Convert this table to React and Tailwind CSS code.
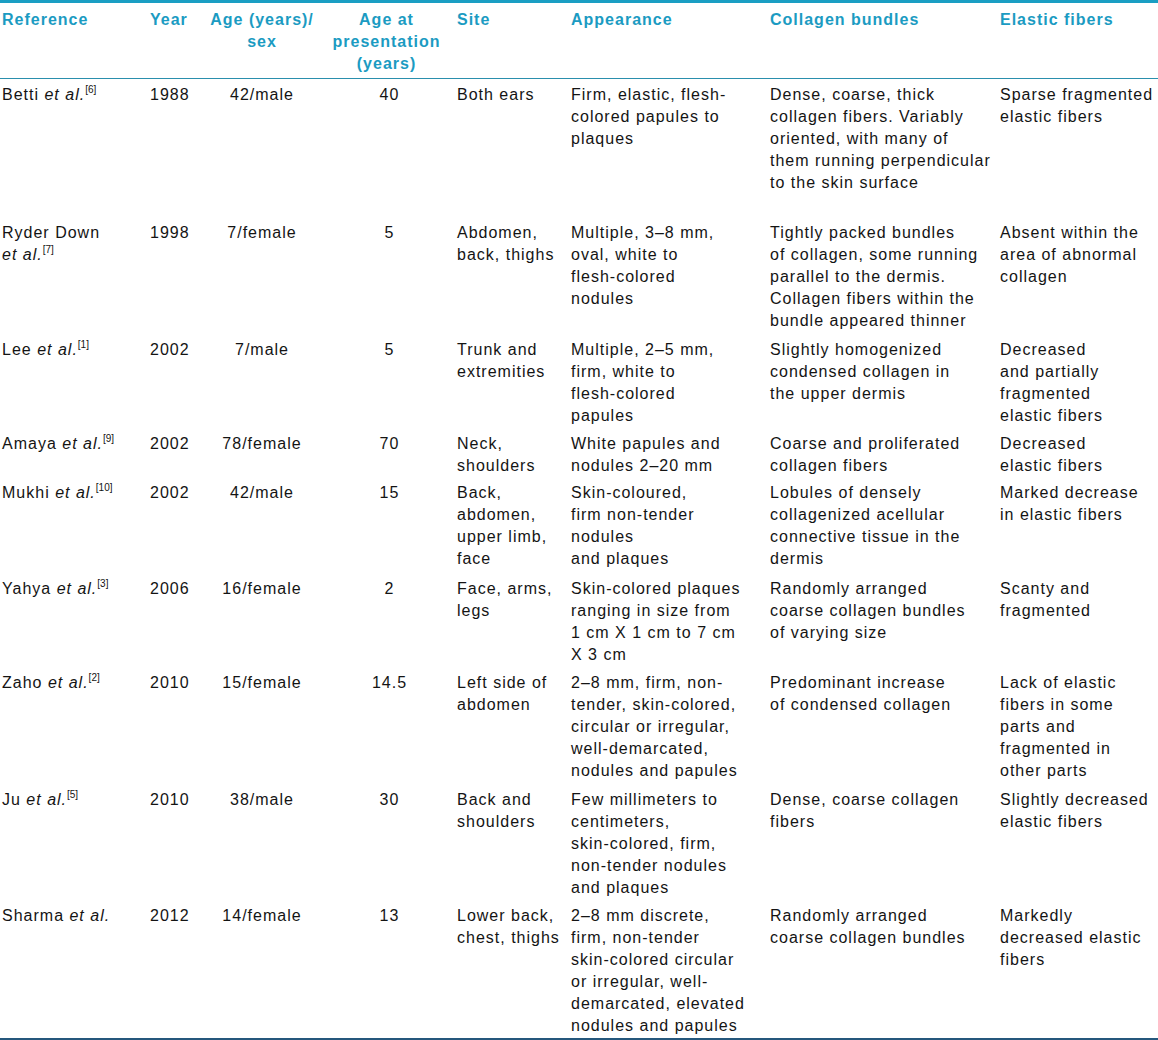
import React from "react";

const rows = [
  {
    ref: ["Betti ", "et al.", "[6]"],
    refLines: 1,
    year: "1988",
    age: "42/male",
    pres: "40",
    site: ["Both ears"],
    app: ["Firm, elastic, flesh-", "colored papules to", "plaques"],
    col: ["Dense, coarse, thick", "collagen fibers. Variably", "oriented, with many of", "them running perpendicular", "to the skin surface"],
    el: ["Sparse fragmented", "elastic fibers"],
    pb: "pb-[23px]",
  },
  {
    ref: ["Ryder Down", "et al.", "[7]"],
    refLines: 2,
    year: "1998",
    age: "7/female",
    pres: "5",
    site: ["Abdomen,", "back, thighs"],
    app: ["Multiple, 3–8 mm,", "oval, white to", "flesh-colored", "nodules"],
    col: ["Tightly packed bundles", "of collagen, some running", "parallel to the dermis.", "Collagen fibers within the", "bundle appeared thinner"],
    el: ["Absent within the", "area of abnormal", "collagen"],
    pb: "pb-[2px]",
  },
  {
    ref: ["Lee ", "et al.", "[1]"],
    refLines: 1,
    year: "2002",
    age: "7/male",
    pres: "5",
    site: ["Trunk and", "extremities"],
    app: ["Multiple, 2–5 mm,", "firm, white to", "flesh-colored", "papules"],
    col: ["Slightly homogenized", "condensed collagen in", "the upper dermis"],
    el: ["Decreased", "and partially", "fragmented", "elastic fibers"],
    pb: "pb-[1px]",
  },
  {
    ref: ["Amaya ", "et al.", "[9]"],
    refLines: 1,
    year: "2002",
    age: "78/female",
    pres: "70",
    site: ["Neck,", "shoulders"],
    app: ["White papules and", "nodules 2–20 mm"],
    col: ["Coarse and proliferated", "collagen fibers"],
    el: ["Decreased", "elastic fibers"],
    pb: "pb-[0px]",
  },
  {
    ref: ["Mukhi ", "et al.", "[10]"],
    refLines: 1,
    year: "2002",
    age: "42/male",
    pres: "15",
    site: ["Back,", "abdomen,", "upper limb,", "face"],
    app: ["Skin-coloured,", "firm non-tender", "nodules", "and plaques"],
    col: ["Lobules of densely", "collagenized acellular", "connective tissue in the", "dermis"],
    el: ["Marked decrease", "in elastic fibers"],
    pb: "pb-[3px]",
  },
  {
    ref: ["Yahya ", "et al.", "[3]"],
    refLines: 1,
    year: "2006",
    age: "16/female",
    pres: "2",
    site: ["Face, arms,", "legs"],
    app: ["Skin-colored plaques", "ranging in size from", "1 cm X 1 cm to 7 cm", "X 3 cm"],
    col: ["Randomly arranged", "coarse collagen bundles", "of varying size"],
    el: ["Scanty and", "fragmented"],
    pb: "pb-[1px]",
  },
  {
    ref: ["Zaho ", "et al.", "[2]"],
    refLines: 1,
    year: "2010",
    age: "15/female",
    pres: "14.5",
    site: ["Left side of", "abdomen"],
    app: ["2–8 mm, firm, non-", "tender, skin-colored,", "circular or irregular,", "well-demarcated,", "nodules and papules"],
    col: ["Predominant increase", "of condensed collagen"],
    el: ["Lack of elastic", "fibers in some", "parts and", "fragmented in", "other parts"],
    pb: "pb-[2px]",
  },
  {
    ref: ["Ju ", "et al.", "[5]"],
    refLines: 1,
    year: "2010",
    age: "38/male",
    pres: "30",
    site: ["Back and", "shoulders"],
    app: ["Few millimeters to", "centimeters,", "skin-colored, firm,", "non-tender nodules", "and plaques"],
    col: ["Dense, coarse collagen", "fibers"],
    el: ["Slightly decreased", "elastic fibers"],
    pb: "pb-[1px]",
  },
  {
    ref: ["Sharma ", "et al.", ""],
    refLines: 1,
    year: "2012",
    age: "14/female",
    pres: "13",
    site: ["Lower back,", "chest, thighs"],
    app: ["2–8 mm discrete,", "firm, non-tender", "skin-colored circular", "or irregular, well-", "demarcated, elevated", "nodules and papules"],
    col: ["Randomly arranged", "coarse collagen bundles"],
    el: ["Markedly", "decreased elastic", "fibers"],
    pb: "pb-[1px]",
  },
];

function Lines({ lines }) {
  return (
    <>
      {lines.map((l, i) => (
        <div key={i} className="whitespace-nowrap">
          {l}
        </div>
      ))}
    </>
  );
}

function RefCell({ r }) {
  const sup = r.ref[2] ? (
    <sup className="text-[10px] tracking-[0px] relative top-[-1px] align-super leading-none">{r.ref[2]}</sup>
  ) : null;
  if (r.refLines === 2) {
    return (
      <>
        <div className="whitespace-nowrap">{r.ref[0]}</div>
        <div className="whitespace-nowrap">
          <i>{r.ref[1]}</i>
          {sup}
        </div>
      </>
    );
  }
  return (
    <div className="whitespace-nowrap">
      {r.ref[0]}
      <i>{r.ref[1]}</i>
      {sup}
    </div>
  );
}

export default function App() {
  const th = "align-top font-bold text-[#1b9bc2] pt-[6px] pb-[3px]";
  return (
    <div className="w-[1158px] h-[1040px] bg-white overflow-hidden" style={{ fontFamily: '"Liberation Sans", Arial, sans-serif' }}>
      <table className="w-[1158px] table-fixed border-collapse text-[16px] leading-[22px] tracking-[1px] text-[#141414]">
        <colgroup>
          <col className="w-[148px]" />
          <col className="w-[58px]" />
          <col className="w-[112px]" />
          <col className="w-[137px]" />
          <col className="w-[114px]" />
          <col className="w-[199px]" />
          <col className="w-[230px]" />
          <col className="w-[160px]" />
        </colgroup>
        <thead>
          <tr className="border-t-[3px] border-t-[#1a9ec3] border-b border-b-[#2a8fad]">
            <th className={th + " text-left pl-[2px]"}>Reference</th>
            <th className={th + " text-left pl-[2px]"}>Year</th>
            <th className={th + " text-center"}>
              <div className="whitespace-nowrap">Age (years)/</div>
              <div>sex</div>
            </th>
            <th className={th + " text-center"}>
              <div>Age at</div>
              <div>presentation</div>
              <div>(years)</div>
            </th>
            <th className={th + " text-left pl-[2px]"}>Site</th>
            <th className={th + " text-left pl-[2px]"}>Appearance</th>
            <th className={th + " text-left pl-[2px]"}>Collagen bundles</th>
            <th className={th + " text-left pl-[2px]"}>Elastic fibers</th>
          </tr>
        </thead>
        <tbody>
          {rows.map((r, i) => {
            const td = "align-top pt-[5px] " + r.pb;
            return (
              <tr key={i}>
                <td className={td + " pl-[2px]"}>
                  <RefCell r={r} />
                </td>
                <td className={td + " pl-[2px]"}>{r.year}</td>
                <td className={td + " text-center"}>{r.age}</td>
                <td className={td + " text-center pl-[6px]"}>{r.pres}</td>
                <td className={td + " pl-[2px]"}>
                  <Lines lines={r.site} />
                </td>
                <td className={td + " pl-[2px]"}>
                  <Lines lines={r.app} />
                </td>
                <td className={td + " pl-[2px]"}>
                  <Lines lines={r.col} />
                </td>
                <td className={td + " pl-[2px]"}>
                  <Lines lines={r.el} />
                </td>
              </tr>
            );
          })}
          <tr className="border-t-[2px] border-t-[#25577c]">
            <td colSpan={8} className="h-[2px] p-0"></td>
          </tr>
        </tbody>
      </table>
    </div>
  );
}
